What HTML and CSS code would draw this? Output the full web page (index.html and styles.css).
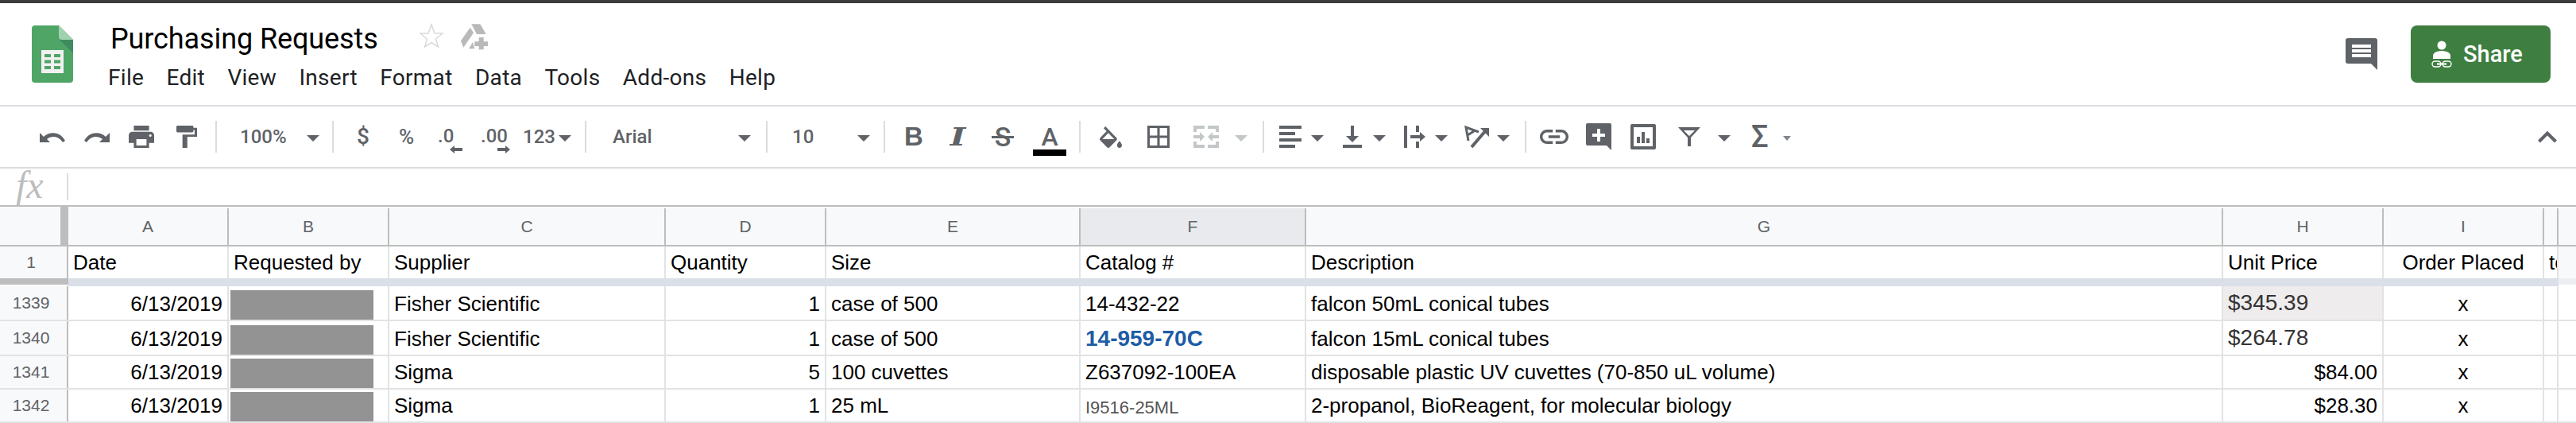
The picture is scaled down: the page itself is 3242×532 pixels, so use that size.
FILE: index.html
```html
<!DOCTYPE html>
<html lang="en">
<head>
<meta charset="utf-8">
<title>Purchasing Requests</title>
<link rel="stylesheet" href="styles.css">
</head>
<body>
<div class="page">
  <header class="appbar">
    <svg class="logo" width="52" height="72" viewBox="0 0 52 72"><path fill="#4fa566" d="M4 0H34L52 18V68a4 4 0 0 1-4 4H4a4 4 0 0 1-4-4V4a4 4 0 0 1 4-4Z"/><path fill="#3f8a5e" d="M35 18L52 35V18Z"/><path fill="#a1d2b0" d="M34 0L52 18H38a4 4 0 0 1-4-4Z"/><path fill="#f1f1f1" d="M12 31H40V60H12Z"/><path fill="#4fa566" d="M16 36h8v4h-8zM28 36h8v4h-8zM16 43.500h8v4h-8zM28 43.500h8v4h-8zM16 51h8v4h-8zM28 51h8v4h-8z"/></svg>
    <div class="docinfo">
      <div class="titleline">
        <span class="doctitle">Purchasing Requests</span>
        <svg class="star" width="32" height="32" viewBox="0 0 32 32"><path fill="none" stroke="#d9d9d9" stroke-width="1.500" d="M16 2l4 11h10l-8.500 7 3 10L16 24.500 7.500 30l3-10L2 13h10z"/></svg>
        <svg class="drive" width="35" height="33" viewBox="0 0 35 33"><path fill="#b9b9b9" d="M14.300 .3H25.300L32.700 13H21ZM12.700 4.700L1 21.300 4.300 29.700 17 11.300ZM11 31.300L16 23 18.300 31.300ZM23.700 17H29.700V22.300H35V28H29.700V32.300H23.700V28H18.300V22.300H23.700Z"/></svg>
      </div>
      <nav class="menubar">
        <span>File</span><span>Edit</span><span>View</span><span>Insert</span><span>Format</span><span>Data</span><span>Tools</span><span>Add-ons</span><span>Help</span>
      </nav>
    </div>
    <svg class="comments" width="40" height="40" viewBox="0 0 40 40"><path fill="#5f6368" d="M3 0H37a3 3 0 0 1 3 3V40L32 32H3a3 3 0 0 1-3-3V3a3 3 0 0 1 3-3Z"/><path fill="#fff" d="M8 8h24v4H8zM8 14h24v4H8zM8 20h24v4H8z"/></svg>
    <button class="share">
      <svg width="26" height="34" viewBox="0 0 26 34"><circle cx="13" cy="6" r="5.500" fill="#fff"/><path fill="#fff" d="M2 23V19C2 15 8 13 13 13S24 15 24 19V23Z"/><g fill="none" stroke="#fff"><rect x="1" y="26" width="11" height="7" rx="3.500" stroke-width="1.400"/><rect x="14" y="26" width="11" height="7" rx="3.500" stroke-width="1.400"/><path stroke-width="2.200" d="M7 29.500H19"/></g></svg>
      <span>Share</span>
    </button>
  </header>

  <div class="toolbar">
    <div class="tb w56"><svg width="32" height="14" viewBox="0 0 32 14"><path fill="#5f6368" d="M0 14V2L5 7C11 1 25 -1 32 12L29 14C24 6 15 5 9 10L13 14Z"/></svg></div>
    <div class="tb w56"><svg width="32" height="14" viewBox="0 0 32 14"><path fill="#5f6368" d="M32 14V2L27 7C21 1 7 -1 0 12L3 14C8 6 17 5 23 10L19 14Z"/></svg></div>
    <div class="tb w60"><svg width="32" height="28" viewBox="2 3 20 18" preserveAspectRatio="none"><path fill="#5f6368" d="M19 8H5c-1.660 0-3 1.340-3 3v6h4v4h12v-4h4v-6c0-1.660-1.340-3-3-3zm-3 11H8v-5h8v5zm3-7c-.550 0-1-.450-1-1s.450-1 1-1 1 .450 1 1-.450 1-1 1zm-1-9H6v4h12V3z"/></svg></div>
    <div class="tb w49"><svg width="26" height="28" viewBox="4 2 17 20" preserveAspectRatio="none"><path fill="#5f6368" d="M18 4V3c0-.550-.450-1-1-1H5c-.550 0-1 .450-1 1v4c0 .550.450 1 1 1h12c.550 0 1-.450 1-1V6h1v4H9v12h4V12h8V4h-3z"/></svg></div>
    <i class="sep m29"></i>
    <div class="tb w116 between pr16"><span class="tt">100%</span><i class="caret"></i></div>
    <i class="sep m29"></i>
    <div class="tb w53"><span class="tt dollar">$</span></div>
    <div class="tb w49"><span class="tt percent">%</span></div>
    <div class="tb w54"><div class="stack short"><span class="tt">.0</span><svg class="endarrow" width="16" height="10" viewBox="0 0 16 10"><path fill="#5f6368" d="M0 5L6 0V3H16V7H6V10Z"/></svg></div></div>
    <div class="tb w53"><div class="stack"><span class="tt">.00</span><svg class="endarrow" width="16" height="10" viewBox="0 0 16 10"><path fill="#5f6368" d="M16 5L10 0V3H0V7H10V10Z"/></svg></div></div>
    <div class="tb w78"><span class="tt">123</span><i class="caret gap4"></i></div>
    <i class="sep m33"></i>
    <div class="tb w193 between pr19"><span class="tt">Arial</span><i class="caret"></i></div>
    <i class="sep m31"></i>
    <div class="tb w115 between pr17"><span class="tt">10</span><i class="caret"></i></div>
    <i class="sep m26"></i>
    <div class="tb w54"><span class="bold">B</span></div>
    <div class="tb w54"><span class="ital">I</span></div>
    <div class="tb w52"><span class="strike">S</span></div>
    <div class="tb w58"><div class="color"><span class="color-a">A</span><i class="color-bar"></i></div></div>
    <i class="sep m24"></i>
    <div class="tb w60"><svg width="28" height="27" viewBox="3 0 18 17" preserveAspectRatio="none"><path fill="#5f6368" d="M16.560 8.940L7.620 0 6.210 1.410l2.380 2.380-5.150 5.150c-.590.590-.590 1.540 0 2.120l5.500 5.500c.290.290.680.440 1.060.440s.770-.150 1.060-.440l5.500-5.500c.590-.580.590-1.530 0-2.120zM5.210 10L10 5.210 14.790 10H5.210zM19 11.500s-2 2.170-2 3.500c0 1.100.900 2 2 2s2-.900 2-2c0-1.330-2-3.500-2-3.500z"/></svg></div>
    <div class="tb w58"><svg width="28" height="28" viewBox="3 3 18 18"><path fill="#5f6368" d="M3 3v18h18V3H3zm8 16H5v-6h6v6zm0-8H5V5h6v6zm8 8h-6v-6h6v6zm0-8h-6V5h6v6z"/></svg></div>
    <div class="tb w52"><svg width="32" height="28" viewBox="0 0 32 28"><path fill="#c4c7c9" d="M0 0H14V4H4V8H0ZM18 0H32V8H28V4H18ZM0 20H4V24H14V28H0ZM28 20H32V28H18V24H28ZM0 12H8V8L14 14 8 20V16H0ZM32 12H24V8L18 14 24 20V16H32Z"/></svg></div>
    <div class="tb w35"><i class="caret off"></i></div>
    <i class="sep m19"></i>
    <div class="tb w40"><svg width="28" height="28" viewBox="0 0 28 28"><path fill="#5f6368" d="M0 0h28v4H0zM0 8h20v4H0zM0 16h28v4H0zM0 24h20v4H0z"/></svg></div>
    <div class="tb w40"><i class="caret"></i></div>
    <div class="tb w38"><svg width="24" height="28" viewBox="0 0 24 28"><path fill="#5f6368" d="M10 0h4v13h6l-8 8-8-8h6zM0 24h24v4H0z"/></svg></div>
    <div class="tb w39"><i class="caret"></i></div>
    <div class="tb w39"><svg width="27" height="28" viewBox="0 0 27 28"><path fill="#5f6368" d="M0 0h4v28H0zM15 0h4v8h-4zM15 20h4v8h-4zM8 12h12V8l7 6-7 6v-4H8z"/></svg></div>
    <div class="tb w37"><i class="caret"></i></div>
    <div class="tb w41"><svg width="31" height="30" viewBox="0 0 31 30"><path fill="none" stroke="#5f6368" stroke-width="3" d="M5 20L2 3 18 9M4 13L12 8"/><path fill="none" stroke="#5f6368" stroke-width="4" d="M9 28L27 7"/><path fill="#5f6368" d="M20 4H31V15Z"/></svg></div>
    <div class="tb w35"><i class="caret"></i></div>
    <i class="sep m17"></i>
    <div class="tb w58"><svg width="36" height="18" viewBox="2 7 20 10" preserveAspectRatio="none"><path fill="#5f6368" d="M3.900 12c0-1.710 1.390-3.100 3.100-3.100h4V7H7c-2.760 0-5 2.240-5 5s2.240 5 5 5h4v-1.900H7c-1.710 0-3.100-1.390-3.100-3.100zM8 13h8v-2H8v2zm9-6h-4v1.900h4c1.710 0 3.100 1.390 3.100 3.100s-1.390 3.100-3.100 3.100h-4V17h4c2.760 0 5-2.240 5-5s-2.240-5-5-5z"/></svg></div>
    <div class="tb w56"><svg width="32" height="34" viewBox="0 0 32 34"><path fill="#5f6368" d="M2 0H30a2 2 0 0 1 2 2V34L26 28H2a2 2 0 0 1-2-2V2a2 2 0 0 1 2-2Z"/><path fill="#fff" d="M14 7h4v6h6v4h-6v6h-4v-6H8v-4h6z"/></svg></div>
    <div class="tb w60"><svg width="32" height="32" viewBox="0 0 32 32"><path fill="#5f6368" fill-rule="evenodd" d="M2 0H30a2 2 0 0 1 2 2V30a2 2 0 0 1-2 2H2a2 2 0 0 1-2-2V2a2 2 0 0 1 2-2ZM4 4V28H28V4Z"/><path fill="#5f6368" d="M8 16h4v8H8zM14 10h4v14h-4zM20 18h4v6h-4z"/></svg></div>
    <div class="tb w50"><svg width="28" height="24" viewBox="0 0 28 24"><path fill="#5f6368" fill-rule="evenodd" d="M0 0H28L16 13V24H12V13ZM7 4L14 11 21 4Z"/></svg></div>
    <div class="tb w42"><i class="caret"></i></div>
    <div class="tb w40"><span class="sigma">Σ</span></div>
    <div class="tb"><i class="caret small"></i></div>
    <svg class="collapse" width="24" height="16" viewBox="0 0 24 16"><path fill="none" stroke="#5f6368" stroke-width="4" d="M1.500 14L12 3.500 22.500 14"/></svg>
  </div>

  <div class="formulabar">
    <span class="fx">fx</span>
    <i class="fx-sep"></i>
  </div>

  <div class="sheet">
    <div class="row colhead">
      <div class="corner"></div>
      <div class="ch">A</div><div class="ch">B</div><div class="ch">C</div><div class="ch">D</div><div class="ch">E</div><div class="ch sel">F</div><div class="ch">G</div><div class="ch">H</div><div class="ch">I</div><div class="ch"></div><div class="edge"></div>
    </div>
    <div class="row r-head">
      <div class="rh">1</div>
      <div class="c">Date</div><div class="c">Requested by</div><div class="c">Supplier</div><div class="c">Quantity</div><div class="c">Size</div><div class="c">Catalog #</div><div class="c">Description</div><div class="c">Unit Price</div><div class="c center">Order Placed</div><div class="c clip">te</div><div class="edge"></div>
    </div>
    <div class="freeze"><i class="freeze-head"></i><i class="freeze-body"></i><i class="freeze-edge"></i></div>
    <div class="row r44">
      <div class="rh">1339</div>
      <div class="c right">6/13/2019</div><div class="c redact"><i></i></div><div class="c">Fisher Scientific</div><div class="c right">1</div><div class="c">case of 500</div><div class="c">14-432-22</div><div class="c">falcon 50mL conical tubes</div><div class="c price shade">$345.39</div><div class="c center">x</div><div class="c"></div><div class="blank"></div>
    </div>
    <div class="row r44">
      <div class="rh">1340</div>
      <div class="c right">6/13/2019</div><div class="c redact"><i></i></div><div class="c">Fisher Scientific</div><div class="c right">1</div><div class="c">case of 500</div><div class="c link">14-959-70C</div><div class="c">falcon 15mL conical tubes</div><div class="c price">$264.78</div><div class="c center">x</div><div class="c"></div><div class="blank"></div>
    </div>
    <div class="row r42">
      <div class="rh">1341</div>
      <div class="c right">6/13/2019</div><div class="c redact"><i></i></div><div class="c">Sigma</div><div class="c right">5</div><div class="c">100 cuvettes</div><div class="c">Z637092-100EA</div><div class="c">disposable plastic UV cuvettes (70-850 uL volume)</div><div class="c right">$84.00</div><div class="c center">x</div><div class="c"></div><div class="blank"></div>
    </div>
    <div class="row r42">
      <div class="rh">1342</div>
      <div class="c right">6/13/2019</div><div class="c redact"><i></i></div><div class="c">Sigma</div><div class="c right">1</div><div class="c">25 mL</div><div class="c sku">I9516-25ML</div><div class="c">2-propanol, BioReagent, for molecular biology</div><div class="c right">$28.30</div><div class="c center">x</div><div class="c"></div><div class="blank"></div>
    </div>
  </div>
</div>
</body>
</html>
```

FILE: styles.css
```css
* { box-sizing: border-box; }
html, body { margin: 0; padding: 0; background: #fff; }
body { overflow: hidden; font-family: "Liberation Sans", Arial, sans-serif; }
i { display: block; font-style: normal; }
.page { width: 3242px; height: 532px; overflow: hidden; border-top: 4px solid #3c3c3c; }

/* App bar */
.appbar { height: 130px; border-bottom: 2px solid #dadce0; display: flex; align-items: flex-start; padding: 28px 32px 0 40px; }
.logo { flex: none; }
.docinfo { margin-left: 44px; margin-top: -6px; display: flex; flex-direction: column; }
.titleline { display: flex; align-items: flex-start; height: 50px; padding-left: 3px; }
.doctitle { font: 400 36px/46px Roboto, sans-serif; letter-spacing: -0.1px; color: #000; width: 388px; white-space: nowrap; }
.star { margin-top: 3px; }
.drive { margin-left: 20px; margin-top: 4px; }
.menubar { display: flex; margin-top: 2px; font: 400 28px/40px Roboto, sans-serif; letter-spacing: 0.3px; color: #202124; }
.menubar span { margin-right: 28.300px; }
.comments { margin-left: auto; margin-top: 16px; flex: none; }
.share { margin-left: 42px; width: 176px; height: 72px; border: 0; border-radius: 8px; background: #3e7f41; color: #fff; display: flex; align-items: center; padding: 0 0 0 26px; font: 500 29px/34px Roboto, sans-serif; }
.share span { margin-left: 14px; }

/* Toolbar */
.toolbar { height: 78px; border-bottom: 2px solid #dadce0; display: flex; align-items: center; padding: 0 24px 0 50px; color: #5f6368; }
.tb { flex: none; display: flex; align-items: center; }
.w35 { width: 35px; } .w37 { width: 37px; } .w38 { width: 38px; } .w39 { width: 39px; } .w40 { width: 40px; } .w41 { width: 41px; } .w42 { width: 42px; }
.w49 { width: 49px; } .w50 { width: 50px; } .w52 { width: 52px; } .w53 { width: 53px; } .w54 { width: 54px; } .w56 { width: 56px; } .w58 { width: 58px; } .w60 { width: 60px; }
.w78 { width: 78px; } .w115 { width: 115px; } .w116 { width: 116px; } .w193 { width: 193px; }
.between { justify-content: space-between; }
.pr16 { padding-right: 16px; } .pr17 { padding-right: 17px; } .pr19 { padding-right: 19px; }
.sep { flex: none; width: 2px; height: 40px; background: #dadce0; }
.m17 { margin-right: 17px; } .m19 { margin-right: 19px; } .m24 { margin-right: 24px; } .m26 { margin-right: 26px; } .m29 { margin-right: 29px; } .m31 { margin-right: 31px; } .m33 { margin-right: 33px; }
.tt { font: 500 24px/24px Roboto, sans-serif; color: #5f6368; }
.dollar { font-size: 28px; }
.percent { font-size: 26px; }
.caret { flex: none; width: 0; height: 0; border-left: 8px solid transparent; border-right: 8px solid transparent; border-top: 8px solid #5f6368; margin-top: 4px; }
.caret.off { border-top-color: #c4c7c9; }
.caret.small { border-left-width: 5px; border-right-width: 5px; border-top-width: 6px; border-top-color: #80868b; }
.gap4 { margin-left: 4px; }
.stack { display: flex; flex-direction: column; margin-top: 8px; width: 37px; }
.stack.short { width: 31px; }
.endarrow { align-self: flex-end; margin-top: 0; }
.bold { font: 700 33px/34px "Liberation Sans", sans-serif; color: #5f6368; margin-left: -2px; }
.ital { font: italic 700 32px/34px "DejaVu Serif", serif; color: #5f6368; display: block; margin-left: 4px; transform: scaleX(1.3); }
.strike { position: relative; width: 28px; text-align: center; font: 500 34px/34px Roboto, sans-serif; color: #5f6368; }
.strike::after { content: ""; position: absolute; left: 0; right: 0; top: 16px; height: 3px; background: #5f6368; }
.color { display: flex; flex-direction: column; align-items: center; width: 42px; margin-top: 8px; }
.color-a { font: 500 32px/30px Roboto, sans-serif; color: #5f6368; }
.color-bar { width: 42px; height: 8px; margin-top: 1px; background: #000; }
.sigma { font: 500 38px/34px Roboto, sans-serif; color: #5f6368; }
.collapse { margin-left: auto; flex: none; }

/* Formula bar */
.formulabar { height: 48px; border-bottom: 2px solid #bdbdbd; display: flex; align-items: center; padding-left: 20px; }
.fx { width: 64px; margin-top: -5px; font: italic 400 48px/40px "Liberation Serif", serif; color: #bdbdbd; }
.fx-sep { width: 2px; height: 34px; background: #dadce0; }

/* Sheet */
.row { display: grid; grid-template-columns: 86px 202px 202px 348px 202px 320px 284px 1154px 202px 202px 18px 22px; }
.colhead { height: 50px; background: #f8f9fa; border-bottom: 2px solid #bdbdbd; padding-top: 2px; }
.corner { border-right: 10px solid #bdbdbd; margin-top: -2px; }
.ch { border-right: 2px solid #bdbdbd; font: 400 21px/46px "Liberation Sans", sans-serif; color: #5f6368; text-align: center; }
.ch.sel { background: #e8eaed; }
.edge { background: #f8f9fa; }
.r-head { height: 40px; }
.r44 { height: 44px; border-bottom: 2px solid #e1e3e4; }
.r42 { height: 42px; border-bottom: 2px solid #e1e3e4; }
.rh { background: #f8f9fa; border-right: 2px solid #bdbdbd; font: 400 21px/40px "Liberation Sans", sans-serif; color: #5f6368; text-align: center; padding-right: 6px; display: flex; align-items: center; justify-content: center; }
.c { min-width: 0; border-right: 2px solid #e1e3e4; padding: 0 6px 5px; font-size: 26px; line-height: 30px; color: #000; white-space: nowrap; overflow: hidden; display: flex; align-items: flex-end; }
.right { justify-content: flex-end; }
.center { justify-content: center; }
.clip { padding-right: 0; }
.redact { padding: 5px 0 0 2px; }
.redact i { width: 180px; height: 37px; background: #939393; }
.price { font-size: 28px; color: #333; padding-bottom: 6px; }
.shade { background: #eeecec; }
.link { font-size: 28px; font-weight: 700; color: #1d5ca6; padding-bottom: 5px; }
.sku { font-size: 22px; color: #555; padding-bottom: 2px; }
.freeze { height: 10px; display: flex; }
.freeze-head { width: 86px; height: 8px; background: #bdbdbd; }
.freeze-body { width: 3134px; background: #dadfe8; }
.freeze-edge { width: 22px; height: 8px; background: #eceef1; }
```
